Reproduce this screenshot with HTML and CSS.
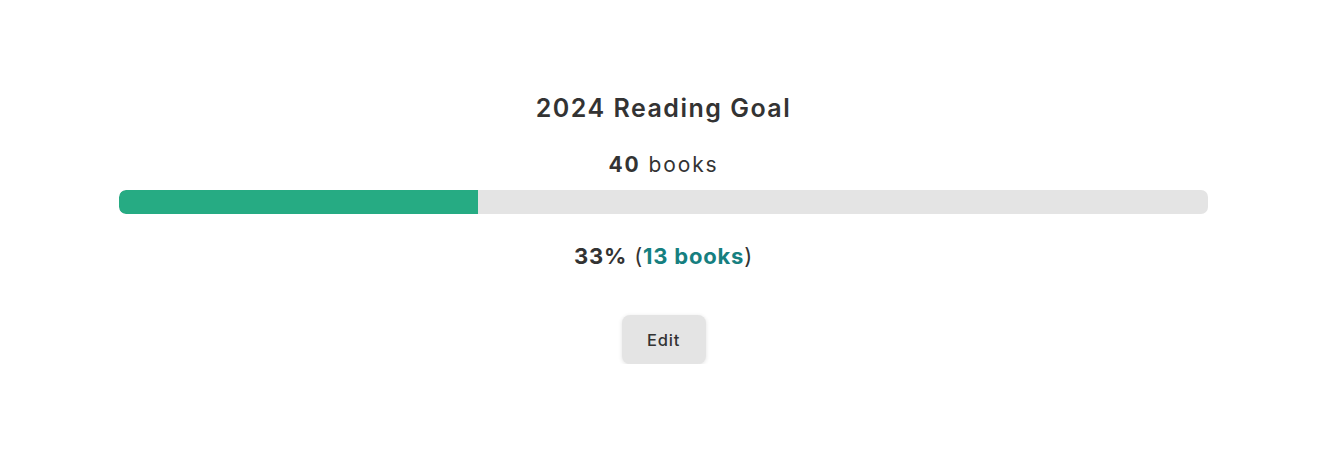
FILE: index.html
```html
<!DOCTYPE html>
<html lang="en">
<head>
<meta charset="utf-8">
<title>2024 Reading Goal</title>
<link rel="stylesheet" href="styles.css">
</head>
<body>
<main class="goal">
  <h1 class="goal-title">2024 Reading Goal</h1>
  <p class="goal-target"><strong>40</strong> books</p>
  <div class="progress">
    <div class="progress-fill" style="width: 33%"></div>
  </div>
  <p class="goal-status"><strong>33%</strong> (<a class="goal-link" href="#">13 books</a>)</p>
  <button class="edit-btn" type="button">Edit</button>
</main>
</body>
</html>
```
FILE: styles.css
```css
html, body {
  margin: 0;
  padding: 0;
  background: #ffffff;
}

body {
  font-family: "Inter", "Noto Sans", "Liberation Sans", sans-serif;
  color: #333333;
}

.goal {
  display: flex;
  flex-direction: column;
  align-items: center;
  padding: 90px 120px 0 119px;
}

.goal-title {
  margin: 0;
  font-size: 25px;
  line-height: 36px;
  font-weight: 600;
  letter-spacing: 1.5px;
  color: #333333;
}

.goal-target {
  margin: 22px 0 0;
  font-size: 21px;
  line-height: 33px;
  font-weight: 400;
  letter-spacing: 1.9px;
}

.goal-target strong {
  font-weight: 700;
}

.progress {
  align-self: stretch;
  margin-top: 9px;
  height: 24px;
  border-radius: 7px;
  background: #e4e4e4;
  overflow: hidden;
}

.progress-fill {
  height: 100%;
  background: #26ab83;
  border-radius: 7px 0 0 7px;
}

.goal-status {
  margin: 26px 0 0;
  font-size: 22px;
  line-height: 33px;
  font-weight: 400;
  letter-spacing: 0.8px;
}

.goal-status strong {
  font-weight: 700;
}

.goal-link {
  color: #167f80;
  font-weight: 700;
  text-decoration: none;
}

.edit-btn {
  margin-top: 42px;
  width: 84px;
  height: 49px;
  border: none;
  border-radius: 8px;
  background: #e4e4e4;
  box-shadow: 0 1px 4px rgba(0, 0, 0, 0.12);
  font-family: inherit;
  font-size: 16.5px;
  font-weight: 500;
  letter-spacing: 0.8px;
  color: #333333;
  cursor: pointer;
}
```
